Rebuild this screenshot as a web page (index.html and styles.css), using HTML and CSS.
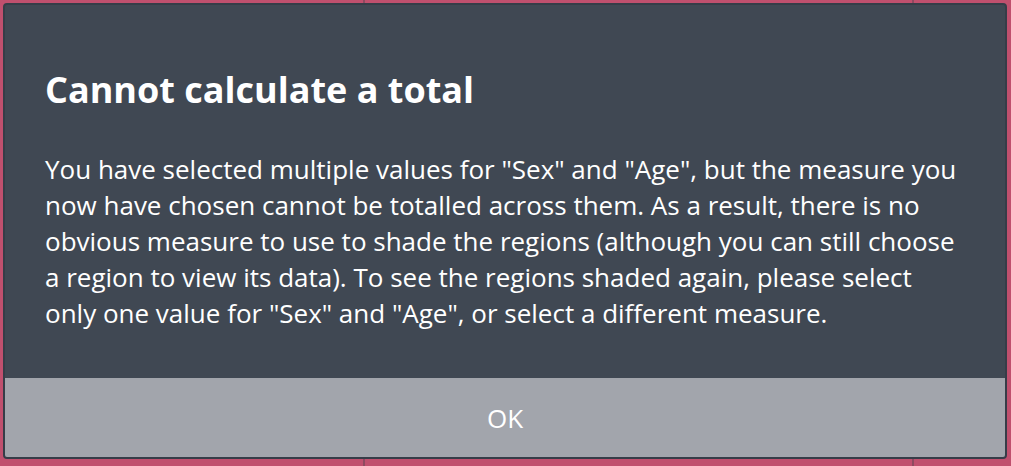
FILE: index.html
```html
<!DOCTYPE html>
<html>
<head>
<meta charset="utf-8">
<link rel="stylesheet" href="styles.css">
</head>
<body>
<div class="backdrop">
  <div class="dialog">
    <div class="content">
      <h1 class="title">Cannot calculate a total</h1>
      <p class="message">You have selected multiple values for "Sex" and "Age", but the measure you now have chosen cannot be totalled across them. As a result, there is no obvious measure to use to shade the regions (although you can still choose a region to view its data). To see the regions shaded again, please select only one value for "Sex" and "Age", or select a different measure.</p>
    </div>
    <div class="actions">
      <button class="ok">OK</button>
    </div>
  </div>
</div>
</body>
</html>
```
FILE: styles.css
```css
html, body {
  margin: 0;
  padding: 0;
  width: 1011px;
  height: 466px;
  overflow: hidden;
}
body {
  background-color: #c0506e;
  background-image:
    linear-gradient(90deg, transparent 363px, #8e4a60 363px, #8e4a60 365px, transparent 365px),
    linear-gradient(90deg, transparent 912px, #8e4a60 912px, #8e4a60 914px, transparent 914px);
}
.backdrop {
  padding: 3px 4px 7px 3px;
  height: 456px;
}
.dialog {
  box-sizing: border-box;
  height: 456px;
  border: 2px solid #363d48;
  border-radius: 4px;
  background: #404853;
  display: flex;
  flex-direction: column;
  overflow: hidden;
  font-family: "Open Sans", "Liberation Sans", sans-serif;
  color: #ffffff;
}
.content {
  flex: 1;
  padding: 61px 40px 0 40px;
}
.title {
  margin: 0;
  font-size: 36px;
  font-weight: 700;
  line-height: 48px;
}
.message {
  margin: 37px 0 0 0;
  font-size: 26px;
  line-height: 36px;
}
.actions {
  height: 79px;
  background: #a2a5ac;
  display: flex;
}
.ok {
  flex: 1;
  border: 0;
  background: transparent;
  color: #ffffff;
  font-family: "Open Sans", "Liberation Sans", sans-serif;
  font-size: 26px;
  padding: 0;
}
```
